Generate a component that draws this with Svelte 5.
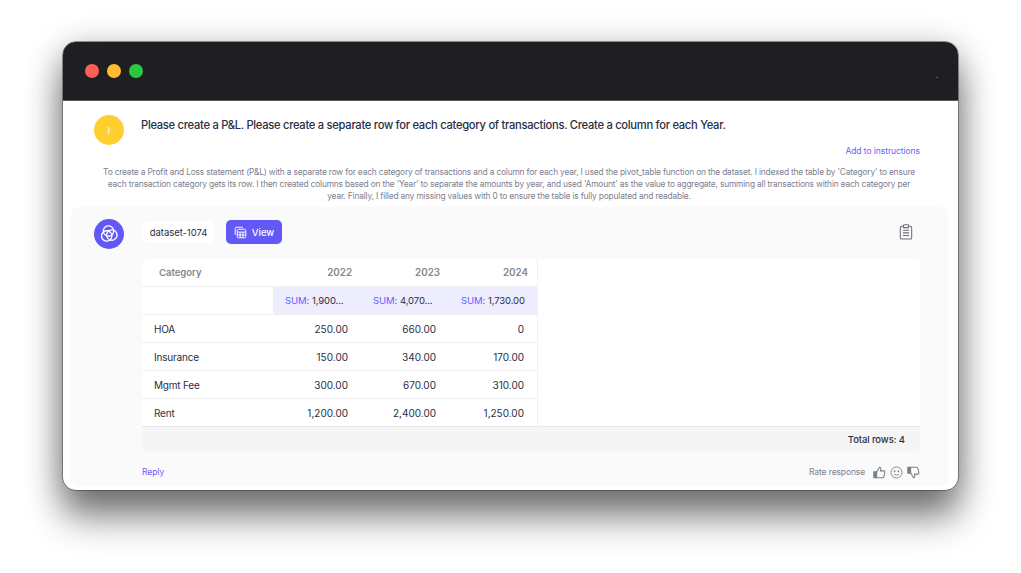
<script>
  const rows = [
    { name: 'HOA', vals: ['250.00', '660.00', '0'] },
    { name: 'Insurance', vals: ['150.00', '340.00', '170.00'] },
    { name: 'Mgmt Fee', vals: ['300.00', '670.00', '310.00'] },
    { name: 'Rent', vals: ['1,200.00', '2,400.00', '1,250.00'] },
  ];
  const years = ['2022', '2023', '2024'];
  const sums = ['1,900...', '4,070...', '1,730.00'];
  const blades = [20, 140, 260];
</script>

<div class="page">
  <div class="window">
    <header class="titlebar">
      <span class="dot red"></span>
      <span class="dot amber"></span>
      <span class="dot green"></span>
      <span class="speck"></span>
    </header>

    <div class="content">
      <section class="question">
        <div class="user-avatar">I</div>
        <p class="prompt">Please create a P&amp;L. Please create a separate row for each category of transactions. Create a column for each Year.</p>
      </section>
      <a class="add-link" href="#top">Add to instructions</a>
      <p class="explain">To create a Profit and Loss statement (P&amp;L) with a separate row for each category of transactions and a column for each year, I used the pivot_table function on the dataset. I indexed the table by 'Category' to ensure each transaction category gets its row. I then created columns based on the 'Year' to separate the amounts by year, and used 'Amount' as the value to aggregate, summing all transactions within each category per year. Finally, I filled any missing values with 0 to ensure the table is fully populated and readable.</p>

      <section class="answer">
        <div class="bot-avatar">
          <svg viewBox="0 0 24 24" width="24" height="24" fill="none" stroke="#fff" stroke-width="1.300">
            {#each blades as a}
              <circle cx="15" cy="12" r="5.200" transform="rotate({a} 12 12)"/>
            {/each}
          </svg>
        </div>

        <div class="answer-main">
          <div class="toolbar">
            <span class="chip">dataset-1074</span>
            <button class="view-btn">
              <svg viewBox="0 0 16 16" width="13" height="13" fill="none" stroke="#fff" stroke-width="1.2">
                <rect x="4" y="4" width="10.500" height="10.500" rx="1.500"/>
                <path d="M1.500 11V3a1.500 1.500 0 0 1 1.500-1.500h8"/>
                <path d="M4 7.500h10.500M4 11h10.500M7.500 7.500v7M11 7.500v7"/>
              </svg>
              View
            </button>
            <svg class="clip" viewBox="0 0 16 18" width="14" height="16" fill="none" stroke="#6b6f76" stroke-width="1.200">
              <rect x="1.500" y="2.500" width="13" height="14.500" rx="1.500"/>
              <rect x="5" y="0.800" width="6" height="3.200" rx="0.800" fill="#fafafa"/>
              <path d="M4.500 7h7M4.500 10h7M4.500 13h7"/>
            </svg>
          </div>

          <div class="table-card">
            <div class="table">
              <div class="row head">
                <div class="cell first">Category</div>
                {#each years as y}<div class="cell num">{y}</div>{/each}
              </div>
              <div class="row sums">
                <div class="cell first"></div>
                {#each sums as s}<div class="cell sum"><span>SUM:</span> {s}</div>{/each}
              </div>
              {#each rows as r}
                <div class="row">
                  <div class="cell first name">{r.name}</div>
                  {#each r.vals as v}<div class="cell num val">{v}</div>{/each}
                </div>
              {/each}
            </div>
            <div class="total">Total rows: 4</div>
          </div>

          <div class="foot">
            <a class="reply" href="#top">Reply</a>
            <span class="rate">Rate response</span>
            <svg class="fb" viewBox="0 0 16 16" width="13" height="13" fill="none" stroke="#7b7f87" stroke-width="1.300" stroke-linejoin="round">
              <rect x="1" y="7" width="3.500" height="7.500" fill="#7b7f87"/>
              <path d="M4.500 7.500 8 1.500c1.200 0 1.800 1 1.500 2.200L9 6h4.500c.8 0 1.300.7 1.100 1.500l-1.200 5.500c-.2.800-.8 1.400-1.600 1.400H4.500"/>
            </svg>
            <svg class="fb" viewBox="0 0 16 16" width="13" height="13" fill="none" stroke="#7b7f87" stroke-width="1.100">
              <circle cx="8" cy="8" r="6.800"/>
              <circle cx="5.700" cy="6.500" r=".7" fill="#7b7f87"/>
              <circle cx="10.300" cy="6.500" r=".7" fill="#7b7f87"/>
              <path d="M5 10.500q3 1.200 6 0"/>
            </svg>
            <svg class="fb" viewBox="0 0 16 16" width="13" height="13" fill="none" stroke="#7b7f87" stroke-width="1.300" stroke-linejoin="round">
              <rect x="1" y="1.500" width="3.500" height="7.500" fill="#7b7f87"/>
              <path d="M4.500 8.500 8 14.500c1.200 0 1.800-1 1.500-2.200L9 10h4.500c.8 0 1.300-.7 1.100-1.500L13.400 3c-.2-.8-.8-1.400-1.600-1.400H4.500"/>
            </svg>
          </div>
        </div>
      </section>
    </div>
  </div>
</div>

<style>
  :global(body) {
    margin: 0;
    background: #fff;
    font-family: Inter, "Liberation Sans", sans-serif;
  }
  .page {
    width: 1021px;
    height: 573px;
    padding: 42px 63px 0;
    box-sizing: border-box;
    overflow: hidden;
  }
  .window {
    width: 895px;
    height: 448px;
    border-radius: 13px;
    overflow: hidden;
    background: #fff;
    display: flex;
    flex-direction: column;
    box-shadow: 0 0 0 .5px #3a3a3c, 0 28px 36px rgba(0, 0, 0, .46), 0 6px 34px rgba(0, 0, 0, .3);
  }
  .titlebar {
    height: 59px;
    flex: none;
    background: #1f1f23;
    display: flex;
    align-items: center;
    gap: 8px;
    padding: 0 22px;
    border-bottom: 1px solid #55565a;
    box-sizing: border-box;
    position: relative;
  }
  .dot { width: 14px; height: 14px; border-radius: 50%; }
  .red { background: #ff5f57; }
  .amber { background: #febc2e; }
  .green { background: #28c840; }
  .speck {
    position: absolute;
    left: 873px;
    top: 35px;
    width: 2px;
    height: 1px;
    background: #55606a;
  }
  .content {
    flex: 1;
    display: flex;
    flex-direction: column;
    min-height: 0;
  }
  .question {
    display: flex;
    gap: 17px;
    padding: 14px 0 0 31px;
    height: 30px;
  }
  .user-avatar {
    width: 30px;
    height: 30px;
    flex: none;
    border-radius: 50%;
    background: #fdd030;
    color: #fff;
    font-size: 9px;
    display: flex;
    align-items: center;
    justify-content: center;
  }
  .prompt {
    margin: 0;
    font-size: 11.200px;
    font-weight: 500;
    line-height: 20px;
    color: #2a2e45;
    letter-spacing: -.29px;
    white-space: nowrap;
  }
  .add-link {
    align-self: flex-end;
    margin-right: 38px;
    font-size: 8.500px;
    line-height: 12px;
    color: #6a5cff;
    text-decoration: none;
    letter-spacing: -.06px;
  }
  .explain {
    margin: 9px 42px 0 39px;
    font-size: 8.400px;
    line-height: 12px;
    color: #7d8090;
    text-align: center;
    letter-spacing: -.18px;
  }
  .answer {
    flex: 1;
    margin: 5px 10px 4px 8px;
    padding: 12px 28px 0 23px;
    display: flex;
    gap: 18px;
    background: #fafafa;
    border-radius: 8px;
    box-sizing: border-box;
    min-height: 0;
  }
  .bot-avatar {
    width: 30px;
    height: 30px;
    flex: none;
    border-radius: 50%;
    background: #6258f5;
    display: flex;
    align-items: center;
    justify-content: center;
  }
  .answer-main {
    flex: 1;
    display: flex;
    flex-direction: column;
    min-width: 0;
  }
  .toolbar {
    display: flex;
    align-items: center;
    height: 26px;
    margin-bottom: 14px;
    gap: 11px;
  }
  .chip {
    background: #fff;
    border-radius: 5px;
    width: 73px;
    height: 22px;
    display: flex;
    align-items: center;
    justify-content: center;
    font-size: 9.500px;
    color: #2a2e45;
    letter-spacing: -.05px;
  }
  .view-btn {
    width: 56px;
    height: 24px;
    border: 0;
    border-radius: 5px;
    background: #6258f5;
    color: #fff;
    font: 500 9.500px Inter, sans-serif;
    display: flex;
    align-items: center;
    justify-content: center;
    gap: 5px;
    padding: 0;
  }
  .clip { margin-left: auto; margin-right: 7px; }
  .table-card {
    height: 193px;
    flex: none;
    background: #fff;
    border-radius: 5px;
    overflow: hidden;
    display: flex;
    flex-direction: column;
  }
  .table {
    width: 395px;
    flex: 1;
    display: flex;
    flex-direction: column;
    box-shadow: 1px 0 0 #f1f1f3;
  }
  .row {
    height: 28px;
    display: grid;
    grid-template-columns: 131px 88px 88px 88px;
    border-bottom: 1px solid #efeff1;
    box-sizing: border-box;
    font-size: 10px;
    color: #2a2e45;
  }
  .row:last-child { border-bottom: 0; height: 27px; }
  .cell {
    display: flex;
    align-items: center;
    min-width: 0;
    white-space: nowrap;
  }
  .first { padding-left: 12px; }
  .num { justify-content: flex-end; padding-right: 13px; }
  .name { letter-spacing: -.2px; }
  .head { color: #85878e; font-weight: 600; }
  .head .first { padding-left: 17px; font-size: 9.500px; }
  .head .num { padding-right: 9px; font-size: 9.800px; }
  .sums .sum {
    background: #eeedfd;
    padding-left: 12px;
    gap: 3px;
    font-size: 9.500px;
    letter-spacing: -.12px;
  }
  .sum span { color: #6a5cff; }
  .total {
    height: 26px;
    flex: none;
    background: #f5f5f6;
    border-top: 1px solid #e9e9eb;
    box-sizing: border-box;
    display: flex;
    align-items: center;
    justify-content: flex-end;
    padding-right: 15px;
    font-size: 9.500px;
    font-weight: 500;
    letter-spacing: -.1px;
    color: #2a2e45;
  }
  .foot {
    display: flex;
    align-items: center;
    margin-top: 12px;
    height: 16px;
    gap: 4px;
  }
  .reply {
    font-size: 8.500px;
    color: #6a5cff;
    text-decoration: none;
    margin-right: auto;
  }
  .rate {
    font-size: 8.500px;
    color: #7d8090;
    margin-right: 4px;
    letter-spacing: -.12px;
  }
</style>
